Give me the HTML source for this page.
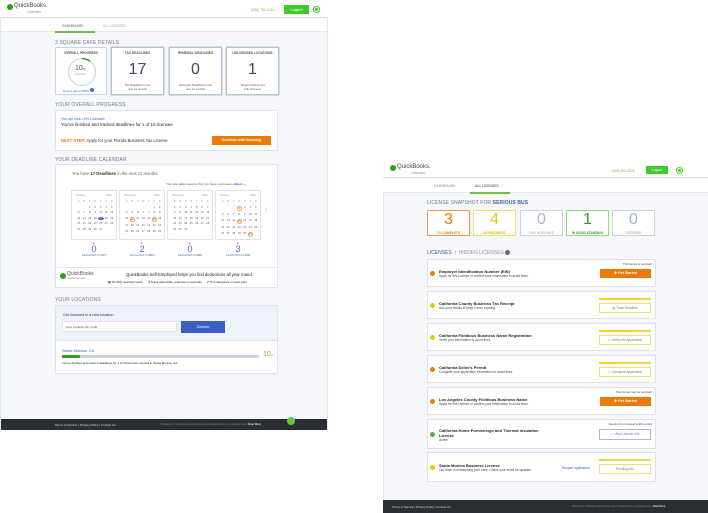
<!DOCTYPE html>
<html><head><meta charset="utf-8"><style>
*{box-sizing:border-box;margin:0;padding:0}
body{width:708px;height:513px;background:#fff;position:relative;overflow:hidden;font-family:"Liberation Sans",sans-serif;color:#333}
.a{position:absolute}
.pg{background:#f5f7fa}
.hdr{background:#fff;border-bottom:1px solid #d8dce0}
.t{position:absolute;white-space:nowrap}
.card{position:absolute;background:#fff;border:1px solid #dde3ea;border-radius:1px}
.sec{font-size:5px;color:#6b7a8c;letter-spacing:.1px}
.big{font-size:16px;color:#3a4a5c;text-align:center;width:100%;left:0}
.lbl{font-size:3.2px;font-weight:bold;color:#555;text-align:center;width:100%;left:0}
.cal{position:absolute;background:#fff;border:1px solid #dde3ea;width:46px;height:50px;font-size:2.6px;color:#999}
.cal .g{position:absolute;left:4px;top:9px;display:grid;grid-template-columns:repeat(7,5.5px);row-gap:2.6px;font-size:2.6px;color:#555;text-align:center}
.btn-o{position:absolute;background:#ec7a08;color:#fff;font-size:3.5px;font-weight:bold;text-align:center}
.dot{position:absolute;width:5px;height:5px;border-radius:50%}
.lc{position:absolute;left:427px;width:229px;background:#fff;border:1px solid #dde3ea}
.lt{font-size:4px;font-weight:bold;color:#222}
.ls{font-size:3.2px;color:#444}
.bar{position:absolute;height:2px;background:#fff4c4;border:.5px solid #f0d64a}
.ob{position:absolute;background:#fff;border:1px solid #f0dc78;font-size:3.2px;color:#777;text-align:center}
</style></head><body>

<!-- LEFT PANEL -->
<div class="a pg" style="left:0;top:0;width:328px;height:430px;border:1px solid #e2e5e9"></div>
<div class="a hdr" style="left:0;top:0;width:328px;height:18px"></div>
<div class="a" style="left:7px;top:4px;width:6px;height:6px;border-radius:50%;background:#2ca01c"></div>
<div class="t" style="left:14px;top:3px;font-size:6px;color:#444">QuickBooks.</div>
<div class="t" style="left:27px;top:10px;font-size:3.5px;color:#888">Licenses</div>
<div class="t" style="left:251px;top:8px;font-size:3.5px;color:#6cc04a">(888) 752-4111</div>
<div class="a" style="left:284px;top:5px;width:25px;height:9px;background:#3ecb2a;color:#fff;font-size:4px;text-align:center;line-height:9px">Logout</div>
<div class="a" style="left:314px;top:7px;width:5px;height:5px;border-radius:50%;background:#3ecb2a;border:1px solid #fff;box-shadow:0 0 0 1px #3ecb2a"></div>
<div class="a" style="left:1px;top:18px;width:326px;height:14px;background:#fff;border-bottom:1px solid #e5e8eb"></div>
<div class="t" style="left:62px;top:24px;font-size:3.4px;color:#555">DASHBOARD</div>
<div class="a" style="left:55px;top:31px;width:40px;height:1.5px;background:#6cc04a"></div>
<div class="t" style="left:103px;top:24px;font-size:3.4px;color:#aaa">ALL LICENSES</div>

<div class="t sec" style="left:55px;top:40px">3 SQUARE CAFE DETAILS</div>
<div class="card" style="left:55px;top:47px;width:52px;height:48px;border-color:#c9d6e6">
 <div class="t lbl" style="top:3px;color:#555">OVERALL PROGRESS</div>
 <svg class="a" style="left:11px;top:9px" width="30" height="30" viewBox="0 0 30 30"><circle cx="15" cy="15" r="13.5" fill="none" stroke="#c9d6e6" stroke-width="1.2"/><path d="M15 1.5 A13.5 13.5 0 0 1 23 4.2" fill="none" stroke="#2ca01c" stroke-width="1.6"/></svg>
 <div class="t" style="left:19px;top:17px;font-size:7px;color:#555">10<span style="font-size:3px">%</span></div>
 <div class="t" style="left:19px;top:25px;font-size:2.6px;color:#999">Licensed</div>
 <div class="t" style="left:7px;top:40px;font-size:3px;color:#2d64c8">How to get to 100% <span style="display:inline-block;width:4px;height:4px;border-radius:50%;background:#3a6bd1"></span></div>
</div>
<div class="card" style="left:111px;top:47px;width:53px;height:48px;border:1px solid #b8c3cf;box-shadow:0 0 0 .5px #b8c3cf">
 <div class="t lbl" style="top:3px">TAX DEADLINES</div><div class="t big" style="top:13px">17</div>
 <div class="t" style="left:0;width:100%;text-align:center;top:36px;font-size:2.8px;color:#555;line-height:3.5px">Tax Deadlines in the<br>next 12 months</div></div>
<div class="card" style="left:169px;top:47px;width:53px;height:48px;border:1px solid #b8c3cf;box-shadow:0 0 0 .5px #b8c3cf">
 <div class="t lbl" style="top:3px">RENEWAL DEADLINES</div><div class="t big" style="top:13px">0</div>
 <div class="t" style="left:0;width:100%;text-align:center;top:36px;font-size:2.8px;color:#555;line-height:3.5px">Renewals Deadlines in the<br>next 12 months</div></div>
<div class="card" style="left:226px;top:47px;width:53px;height:48px;border:1px solid #b8c3cf;box-shadow:0 0 0 .5px #b8c3cf">
 <div class="t lbl" style="top:3px">UNLICENSED LOCATIONS</div><div class="t big" style="top:13px">1</div>
 <div class="t" style="left:0;width:100%;text-align:center;top:36px;font-size:2.8px;color:#555;line-height:3.5px">Target locations not<br>fully licensed</div></div>

<div class="t sec" style="left:55px;top:102px">YOUR OVERALL PROGRESS</div>
<div class="card" style="left:55px;top:110px;width:223px;height:41px">
 <div class="t" style="left:5px;top:6px;font-size:3.6px;color:#2d64c8">You are now 10% Licensed.</div>
 <div class="t" style="left:5px;top:11px;font-size:4.4px;color:#222">You've finished and tracked deadlines for 1 of 10 licenses.</div>
 <div class="t" style="left:5px;top:27px;font-size:4.2px;color:#333"><b style="color:#ec7a08">NEXT STEP:</b> Apply for your Florida Business Tax License</div>
 <div class="btn-o" style="left:156px;top:25px;width:59px;height:9px;line-height:9px">Continue with licensing</div>
</div>

<div class="t sec" style="left:55px;top:157px">YOUR DEADLINE CALENDAR</div>
<div class="card" style="left:55px;top:164px;width:223px;height:124px">
 <div class="t" style="left:16px;top:6px;font-size:4.2px;color:#666">You have <b style="color:#333">17 Deadlines</b> in the next 12 months.</div>
 <div class="t" style="left:110px;top:17px;font-size:3px;color:#555">Your due dates assume that you have employees. <b style="color:#2d64c8">Adjust ⌄</b></div>
 <div class="a" style="left:0;top:102px;width:221px;height:1px;background:#e5e8eb"></div>
 <div class="a" style="left:4px;top:108px;width:6px;height:6px;border-radius:50%;background:#2ca01c"></div>
 <div class="t" style="left:11px;top:106px;font-size:5px;color:#555">QuickBooks</div>
 <div class="t" style="left:12px;top:112px;font-size:2.6px;color:#888">Self-Employed</div>
 <div class="t" style="left:70px;top:107px;font-size:4.2px;color:#222">QuickBooks Self-Employed helps you find deductions all year round.</div>
 <div class="t" style="left:52px;top:115px;font-size:3px;color:#222">▦ Simplify quarterly taxes &nbsp;&nbsp;&nbsp;&nbsp;&nbsp; $ Track deductible expenses in seconds &nbsp;&nbsp;&nbsp;&nbsp; ✔ Put categories on auto-pilot</div>
</div>
<div class="t" style="left:264px;top:204px;font-size:10px;color:#ccd">›</div>
<div id="cals"></div>

<div class="t sec" style="left:55px;top:297px">YOUR LOCATIONS</div>
<div class="card" style="left:55px;top:305px;width:223px;height:69px">
 <div class="a" style="left:0;top:0;width:221px;height:35px;background:#eef3fa;border-bottom:1px solid #e0e5ea"></div>
 <div class="t" style="left:7px;top:7px;font-size:3.8px;color:#333">Get licensed in a new location</div>
 <div class="a" style="left:6px;top:15px;width:115px;height:11px;background:#fff;border:1px solid #dde3ea"></div>
 <div class="t" style="left:10px;top:19px;font-size:3px;color:#555">New Location Zip Code</div>
 <div class="a" style="left:125px;top:15px;width:44px;height:12px;background:#3b5fc0;color:#fff;font-size:4px;text-align:center;line-height:12px">Search</div>
 <div class="t" style="left:6px;top:42px;font-size:4px;color:#2d64c8">Santa Monica, CA</div>
 <div class="a" style="left:6px;top:49px;width:197px;height:3px;background:#c8d4e6;border-radius:1px"></div>
 <div class="a" style="left:6px;top:49px;width:18px;height:3px;background:#2ca01c;border-radius:1px"></div>
 <div class="t" style="left:207px;top:45px;font-size:7px;color:#6cc04a">10<span style="font-size:3px">%</span></div>
 <div class="t" style="left:6px;top:55px;font-size:3px;color:#222">You've finished and tracked deadlines for 1 of 10 licenses needed in Santa Monica, CA.</div>
</div>
<div class="a" style="left:1px;top:419px;width:326px;height:11px;background:#2b2f35"></div>
<div class="t" style="left:55px;top:423px;font-size:3px;color:#ddd">Terms of Service | Privacy Policy | Contact Us</div>
<div class="t" style="left:160px;top:423px;font-size:2.6px;color:#888">*Disclaimer: Information and services are not legal advice or a legal service. <b style="color:#ddd">Read More</b></div>
<div class="a" style="left:287px;top:417px;width:8px;height:8px;border-radius:50%;background:#6cc04a"></div>

<!-- RIGHT PANEL -->
<div class="a pg" style="left:383px;top:160px;width:325px;height:353px;border-left:1px solid #e2e5e9"></div>
<div class="a hdr" style="left:383px;top:160px;width:325px;height:18px"></div>
<div class="a" style="left:390px;top:165px;width:6px;height:6px;border-radius:50%;background:#2ca01c"></div>
<div class="t" style="left:397px;top:164px;font-size:6px;color:#444">QuickBooks.</div>
<div class="t" style="left:411px;top:171px;font-size:3.5px;color:#888">Licenses</div>
<div class="t" style="left:612px;top:169px;font-size:3.3px;color:#6cc04a">(888) 902-3328</div>
<div class="a" style="left:646px;top:166px;width:22px;height:8px;background:#3ecb2a;color:#fff;font-size:3.5px;text-align:center;line-height:8px">Logout</div>
<div class="a" style="left:677px;top:168px;width:5px;height:5px;border-radius:50%;background:#3ecb2a;border:1px solid #fff;box-shadow:0 0 0 1px #3ecb2a"></div>
<div class="a" style="left:383px;top:178px;width:325px;height:15px;background:#fff;border-bottom:1px solid #e5e8eb"></div>
<div class="t" style="left:434px;top:184px;font-size:3.4px;color:#888">DASHBOARD</div>
<div class="t" style="left:475px;top:184px;font-size:3.4px;color:#333">ALL LICENSES</div>
<div class="a" style="left:470px;top:192px;width:40px;height:1.5px;background:#6cc04a"></div>

<div class="t sec" style="left:427px;top:200px">LICENSE SNAPSHOT FOR <b style="color:#3b5fa0">SERIOUS BUS</b></div>
<div class="card" style="left:427px;top:210px;width:43px;height:26px;border-color:#f09a50"><div class="t big" style="top:0px;color:#ec7a08">3</div><div class="t lbl" style="top:20px;color:#ec7a08">TO COMPLETE</div></div>
<div class="card" style="left:473px;top:210px;width:43px;height:26px;border-color:#f3dd6a"><div class="t big" style="top:0px;color:#e8c400">4</div><div class="t lbl" style="top:20px;color:#d9b800">IN PROGRESS</div></div>
<div class="card" style="left:520px;top:210px;width:43px;height:26px;border-color:#c9d2dd"><div class="t big" style="top:0px;color:#aab4c0">0</div><div class="t lbl" style="top:20px;color:#999;font-weight:normal">DUE IN 30 DAYS</div></div>
<div class="card" style="left:566px;top:210px;width:43px;height:26px;border-color:#8fdc7a"><div class="t big" style="top:0px;color:#2ca01c">1</div><div class="t lbl" style="top:20px;color:#2ca01c">IN GOOD STANDING</div></div>
<div class="card" style="left:612px;top:210px;width:43px;height:26px;border-color:#c9d2dd"><div class="t big" style="top:0px;color:#aab4c0">0</div><div class="t lbl" style="top:20px;color:#999;font-weight:normal">OVERDUE</div></div>

<div class="t" style="left:427px;top:250px;font-size:5px;color:#3b5fa0">LICENSES <span style="color:#999">&nbsp;|&nbsp; HIDDEN LICENSES</span> <span style="display:inline-block;width:5px;height:5px;border-radius:50%;background:#666;vertical-align:middle"></span></div>

<div id="lic"></div>

<div class="a" style="left:383px;top:500px;width:325px;height:13px;background:#2b2f35"></div>
<div class="t" style="left:392px;top:505px;font-size:2.9px;color:#ddd">Terms of Service | Privacy Policy | Contact Us</div>
<div class="t" style="left:572px;top:505px;font-size:2.4px;color:#888">*Disclaimer: Information and services are not legal advice or a legal service. <b style="color:#ddd">Read More</b></div>

<script>
(function(){
var c=document.getElementById('cals'),h='';
var m=[['October',2,31,[[17,'b']]],['November',5,30,[[11,'o'],[15,'o']]],['December',0,31,[]],['January',3,31,[[1,'o'],[15,'o'],[31,'o']]]];
var xs=[71,119,167,215],cnt=['0','2','0','3'],ab=['OCT','NOV','DEC','JAN'];
m.forEach(function(v,i){
 var g='';for(var k=0;k<7;k++)g+='<span style="color:#999">'+'SMTWTFS'[k]+'</span>';
 for(var k=0;k<v[1];k++)g+='<span></span>';
 for(var d=1;d<=v[2];d++){var s='';v[3].forEach(function(x){if(x[0]==d)s=x[1]=='b'?'background:#2d55c8;color:#fff;border-radius:50%':'border:.6px solid #f0a050;border-radius:50%';});g+='<span style="'+s+'">'+d+'</span>';}
 h+='<div class="cal" style="left:'+xs[i]+'px;top:190px"><span class="t" style="left:4px;top:3px">'+v[0]+'</span><span class="t" style="right:4px;top:3px">20'+(i==3?'20':'19')+'</span><div class="g">'+g+'</div></div>';
 h+='<div class="t" style="left:'+(xs[i]+21)+'px;top:241px;font-size:3px;color:#6b82b8">▲</div><div class="t" style="left:'+xs[i]+'px;width:46px;text-align:center;top:244px;font-size:9px;color:#5a6e94">'+cnt[i]+'</div><div class="t" style="left:'+xs[i]+'px;width:46px;text-align:center;top:254px;font-size:2.6px;color:#5a7bc0">DEADLINES IN <b>'+ab[i]+'</b></div>';
});
c.innerHTML=h;
var L=[
[259,28,'#ec7a08','Employer Identification Number (EIN)','Apply for this License or confirm your information to avoid fines.','req','This license is required!'],
[291,28,'#f0c800','California County Business Tax Receipt','Add your details to keep it from expiring.','y','▤ Track Deadline',80],
[323,28,'#f0c800','California Fictitious Business Name Registration','Verify your information to avoid fines.','y','✔ Verify Info Application',68],
[355,28,'#ec7a08',"California Seller's Permit",'Complete your application information to avoid fines.','y','▢ Complete Application',35],
[387,28,'#ec7a08','Los Angeles County Fictitious Business Name','Apply for this License or confirm your information to avoid fines.','req','This license may be required!'],
[419,30,'#4cb13c','California Home Furnishings and Thermal Insulation<br>License','Active','g','Needs to be renewed in <b>24</b> months'],
[452,30,'#f0c800','Santa Monica Business License','Our team is researching your case. Check your email for updates.','p','Pending Info',10]];
var o='';
L.forEach(function(r){
 var y=r[0],H=r[1];
 o+='<div class="lc" style="top:'+y+'px;height:'+H+'px"></div>';
 o+='<div class="dot" style="left:430px;top:'+(y+H/2-2.5)+'px;background:'+r[2]+'"></div>';
 var ty=r[5]=='g'?y+9:y+H/2-4.5;
 o+='<div class="t lt" style="left:439px;top:'+ty+'px;line-height:5px">'+r[3]+'</div>';
 o+='<div class="t ls" style="left:439px;top:'+(ty+(r[5]=='g'?10:5))+'px">'+r[4]+'</div>';
 if(r[5]=='req'){o+='<div class="t" style="right:56px;top:'+(y+3)+'px;font-size:2.8px;color:#444">'+r[6]+'</div><div class="btn-o" style="left:600px;top:'+(y+10)+'px;width:51px;height:9px;line-height:9px">✚ Get Started</div>';}
 else if(r[5]=='g'){o+='<div class="t" style="right:56px;top:'+(y+3)+'px;font-size:2.8px;color:#444">'+r[6]+'</div><div class="ob" style="left:599px;top:'+(y+10)+'px;width:52px;height:11px;line-height:9px;border-color:#aab8c8;color:#5a7bc0">▢ View License Info</div>';}
 else{var bw=r[7];o+='<div class="bar" style="left:599px;top:'+(y+7)+'px;width:52px"></div><div class="a" style="left:599px;top:'+(y+7)+'px;width:'+(52*bw/100)+'px;height:2px;background:#f0d020"></div><div class="ob" style="left:599px;top:'+(y+12)+'px;width:52px;height:10px;line-height:8px">'+r[6]+'</div>';
 if(r[5]=='p')o+='<div class="t" style="left:562px;top:'+(y+14)+'px;font-size:3.2px;color:#2d64c8">Reopen Application</div>';}
});
document.getElementById('lic').innerHTML=o;
})();
</script>
</body></html>
